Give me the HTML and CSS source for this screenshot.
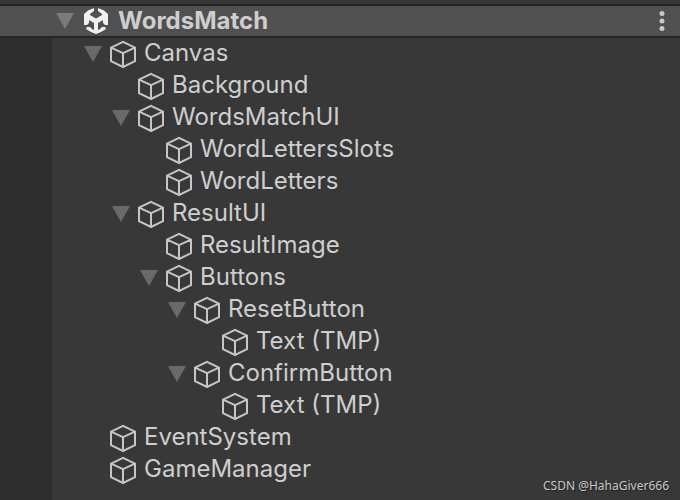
FILE: index.html
```html
<!DOCTYPE html>
<html lang="en">
<head>
    <meta charset="UTF-8">
    <meta name="viewport" content="width=device-width, initial-scale=1.0">
    <title>WordsMatch</title>
    <link rel="stylesheet" href="styles.css">
</head>

<body>

    <!-- shared icons -->
    <svg class="icon-defs" aria-hidden="true">
        <symbol id="cube" viewBox="0 0 28 28">
            <path d="M14 1.8 26 7.6v13.6L14 27 2 21.2V7.6zM2 7.6l12 5.6 12-5.6M14 13.2V27"/>
        </symbol>
        <symbol id="arrow" viewBox="0 0 18 16">
            <path d="M0 0h18L9 16z"/>
        </symbol>
    </svg>

    <header class="scene">
        <button class="toggle" type="button" aria-label="Toggle WordsMatch"><svg><use href="#arrow"/></svg></button>
        <svg class="scene-icon" viewBox="0 0 24 26">
            <path d="M10 0v3L6 6v1l6 3.5L18 7V6l-4-3V0l6 2.5L24 6v11h-3l-2-2v-3l-5 3v7l2-1 2-2h3l1 2-5 3-5 2-5-2-5-3 1-2h3l2 2 2 1v-7l-5-3v3l-2 2H0V6l4-3.5z"/>
        </svg>
        <h1>WordsMatch</h1>
        <button class="menu" type="button" aria-label="Scene menu">
            <svg viewBox="0 0 6 20"><circle cx="3" cy="2.5" r="2.5"/><circle cx="3" cy="10" r="2.5"/><circle cx="3" cy="17.5" r="2.5"/></svg>
        </button>
    </header>

    <main class="hierarchy">
        <ul class="tree">
            <li>
                <div class="row"><button class="toggle" type="button" aria-label="Toggle Canvas"><svg><use href="#arrow"/></svg></button><svg class="cube"><use href="#cube"/></svg><span>Canvas</span></div>
                <ul>
                    <li><div class="row"><svg class="cube"><use href="#cube"/></svg><span>Background</span></div></li>
                    <li>
                        <div class="row"><button class="toggle" type="button" aria-label="Toggle WordsMatchUI"><svg><use href="#arrow"/></svg></button><svg class="cube"><use href="#cube"/></svg><span>WordsMatchUI</span></div>
                        <ul>
                            <li><div class="row"><svg class="cube"><use href="#cube"/></svg><span>WordLettersSlots</span></div></li>
                            <li><div class="row"><svg class="cube"><use href="#cube"/></svg><span>WordLetters</span></div></li>
                        </ul>
                    </li>
                    <li>
                        <div class="row"><button class="toggle" type="button" aria-label="Toggle ResultUI"><svg><use href="#arrow"/></svg></button><svg class="cube"><use href="#cube"/></svg><span>ResultUI</span></div>
                        <ul>
                            <li><div class="row"><svg class="cube"><use href="#cube"/></svg><span>ResultImage</span></div></li>
                            <li>
                                <div class="row"><button class="toggle" type="button" aria-label="Toggle Buttons"><svg><use href="#arrow"/></svg></button><svg class="cube"><use href="#cube"/></svg><span>Buttons</span></div>
                                <ul>
                                    <li>
                                        <div class="row"><button class="toggle" type="button" aria-label="Toggle ResetButton"><svg><use href="#arrow"/></svg></button><svg class="cube"><use href="#cube"/></svg><span>ResetButton</span></div>
                                        <ul>
                                            <li><div class="row"><svg class="cube"><use href="#cube"/></svg><span>Text (TMP)</span></div></li>
                                        </ul>
                                    </li>
                                    <li>
                                        <div class="row"><button class="toggle" type="button" aria-label="Toggle ConfirmButton"><svg><use href="#arrow"/></svg></button><svg class="cube"><use href="#cube"/></svg><span>ConfirmButton</span></div>
                                        <ul>
                                            <li><div class="row"><svg class="cube"><use href="#cube"/></svg><span>Text (TMP)</span></div></li>
                                        </ul>
                                    </li>
                                </ul>
                            </li>
                        </ul>
                    </li>
                </ul>
            </li>
            <li><div class="row"><svg class="cube"><use href="#cube"/></svg><span>EventSystem</span></div></li>
            <li><div class="row"><svg class="cube"><use href="#cube"/></svg><span>GameManager</span></div></li>
        </ul>
    </main>

    <div class="watermark">CSDN @HahaGiver666</div>

</body>
</html>
```

FILE: styles.css
```css
* {
    box-sizing: border-box;
}
body {
    margin: 0;
    padding-top: 4px;
    min-height: 100vh;
    display: flex;
    flex-direction: column;
    background-color: #383838;
    color: #cecece;
    font-family: Inter, sans-serif;
    font-size: 24px;
    line-height: 28px;
}
button {
    padding: 0;
    border: none;
    background: none;
    cursor: pointer;
}
svg {
    display: block;
    flex: none;
}
ul {
    list-style: none;
    margin: 0;
    padding: 0;
}
.icon-defs {
    position: absolute;
    width: 0;
    height: 0;
}
.scene {
    display: flex;
    align-items: center;
    height: 34px;
    padding: 0 15px 0 56px;
    background-color: #505050;
    border-top: 2px solid #232323;
    border-bottom: 2px solid #262626;
}
.scene h1 {
    flex: 1;
    margin: 0 0 0 10px;
    font-size: 24px;
    font-weight: 700;
}
.scene-icon {
    width: 24px;
    height: 26px;
    margin-left: 10px;
    fill: #f0f0f0;
}
.toggle svg {
    width: 18px;
    height: 16px;
    fill: #6a6a6a;
}
.scene .toggle svg {
    fill: #7a7a7a;
}
.menu svg {
    width: 6px;
    height: 20px;
    fill: #c8c8c8;
}
.hierarchy {
    flex: 1;
    border-left: 52px solid #2d2d2d;
}
.tree {
    padding-left: 32px;
}
.tree ul {
    padding-left: 28px;
}
.row {
    display: flex;
    align-items: center;
    height: 32px;
}
.row .toggle {
    width: 18px;
}
.row .cube {
    width: 28px;
    height: 28px;
    margin-left: 7px;
    fill: none;
    stroke: #c6c6c6;
    stroke-width: 2;
    stroke-linejoin: round;
}
.row .cube:first-child {
    margin-left: 25px;
}
.row span {
    margin-left: 7px;
    padding-bottom: 2px;
}
.watermark {
    position: absolute;
    right: 11px;
    bottom: 4px;
    color: #c8c8c8;
    font-family: "Noto Sans", sans-serif;
    font-size: 12px;
    line-height: 20px;
    text-shadow: 1px 1px 1px #222;
}
```
